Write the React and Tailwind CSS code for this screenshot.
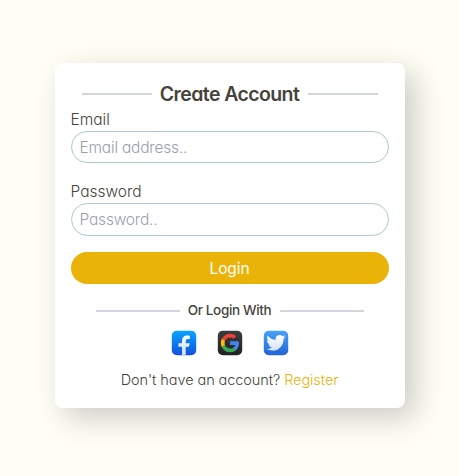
import React from 'react';

function Divider({ width }) {
  return <span className={`mt-[2px] h-[2px] shrink-0 bg-gray-300 ${width}`} />;
}

function FacebookIcon() {
  return (
    <svg width="26" height="26" viewBox="0 0 26 26" aria-label="Facebook">
      <defs>
        <linearGradient id="fb" x1="0" y1="0" x2="0" y2="1">
          <stop offset="0" stopColor="#06a4ff" />
          <stop offset="1" stopColor="#1450dc" />
        </linearGradient>
        <linearGradient id="fbGlyph" x1="0" y1="0" x2="0" y2="1">
          <stop offset="0" stopColor="#fff" />
          <stop offset="1" stopColor="#cbdcf8" />
        </linearGradient>
      </defs>
      <rect x="0.8" y="0.8" width="24.4" height="24.4" rx="5" fill="url(#fb)" />
      <path
        d="M11 25.2v-8.4H7.5v-3.5H11v-2.4c0-3.6 2.1-5.5 5.3-5.5.9 0 1.8.1 2.5.3v3.2h-1.9c-1.6 0-2.2.8-2.2 2v2.4h3.9l-.6 3.5h-3.3v8.4z"
        fill="url(#fbGlyph)"
      />
    </svg>
  );
}

function GoogleIcon() {
  return (
    <svg width="26" height="26" viewBox="0 0 26 26" aria-label="Google">
      <defs>
        <linearGradient id="gg" x1="0" y1="0" x2="0" y2="1">
          <stop offset="0" stopColor="#3c3c3c" />
          <stop offset="1" stopColor="#212121" />
        </linearGradient>
      </defs>
      <rect x="0.8" y="0.8" width="24.4" height="24.4" rx="5" fill="url(#gg)" />
      <g transform="translate(3 2.9) scale(0.84)">
        <path fill="#4285f4" d="M22.56 12.25c0-.78-.07-1.53-.2-2.25H12v4.26h5.92c-.26 1.37-1.04 2.53-2.21 3.31v2.77h3.57c2.08-1.92 3.28-4.74 3.28-8.09z" />
        <path fill="#34a853" d="M12 23c2.97 0 5.46-.98 7.28-2.66l-3.57-2.77c-.98.66-2.23 1.06-3.71 1.06-2.86 0-5.29-1.93-6.16-4.53H2.18v2.84C3.99 20.53 7.7 23 12 23z" />
        <path fill="#fbbc05" d="M5.84 14.09c-.22-.66-.35-1.36-.35-2.09s.13-1.43.35-2.09V7.07H2.18C1.43 8.55 1 10.22 1 12s.43 3.45 1.18 4.93l3.66-2.84z" />
        <path fill="#ea4335" d="M12 5.38c1.62 0 3.06.56 4.21 1.64l3.15-3.15C17.45 2.09 14.97 1 12 1 7.7 1 3.99 3.47 2.18 7.07l3.66 2.84c.87-2.6 3.3-4.53 6.16-4.53z" />
      </g>
    </svg>
  );
}

function TwitterIcon() {
  return (
    <svg width="26" height="26" viewBox="0 0 26 26" aria-label="Twitter">
      <defs>
        <linearGradient id="tw" x1="0" y1="0" x2="0" y2="1">
          <stop offset="0" stopColor="#48a2fb" />
          <stop offset="1" stopColor="#2463d6" />
        </linearGradient>
        <linearGradient id="twGlyph" x1="0" y1="0" x2="0" y2="1">
          <stop offset="0" stopColor="#fff" />
          <stop offset="1" stopColor="#d5e3f8" />
        </linearGradient>
      </defs>
      <rect x="0.8" y="0.8" width="24.4" height="24.4" rx="5" fill="url(#tw)" />
      <path
        transform="translate(3.3 3.2) scale(0.8)"
        fill="url(#twGlyph)"
        d="M23.953 4.57a10 10 0 01-2.825.775 4.958 4.958 0 002.163-2.723c-.951.555-2.005.959-3.127 1.184a4.92 4.92 0 00-8.384 4.482C7.69 8.095 4.067 6.13 1.64 3.162a4.822 4.822 0 00-.666 2.475c0 1.71.87 3.213 2.188 4.096a4.904 4.904 0 01-2.228-.616v.06a4.923 4.923 0 003.946 4.827 4.996 4.996 0 01-2.212.085 4.936 4.936 0 004.604 3.417 9.867 9.867 0 01-6.102 2.105c-.39 0-.779-.023-1.17-.067a13.995 13.995 0 007.557 2.209c9.053 0 13.998-7.496 13.998-13.985 0-.21 0-.42-.015-.63A9.935 9.935 0 0024 4.59z"
      />
    </svg>
  );
}

export default function App() {
  return (
    <main className="flex h-[476px] w-full justify-center bg-[#fefef5] pt-[63px] font-['Inter',sans-serif] text-[15.5px] text-[#45443c] [font-feature-settings:'cv11']">
      <form className="flex h-[345px] w-[350px] flex-col rounded-lg bg-white px-4 pt-4 shadow-[10px_10px_30px_rgba(0,0,0,0.2)]">
        <div className="flex h-7 items-center justify-center gap-2">
          <Divider width="w-[70px]" />
          <h1 className="flex w-[140px] justify-center whitespace-nowrap pt-px text-[19.5px] leading-7 font-semibold tracking-[-0.6px]">Create Account</h1>
          <Divider width="w-[70px]" />
        </div>
        <label htmlFor="email" className="h-6 pt-px leading-6 font-light">Email</label>
        <input id="email" type="email" placeholder="Email address.." className="h-8 w-full rounded-full border border-[#adc8d0] px-2 font-light tracking-[-0.2px] outline-none placeholder:text-gray-400" />
        <label htmlFor="password" className="mt-4 h-6 pt-px leading-6 font-light">Password</label>
        <input id="password" type="password" placeholder="Password.." className="h-[33px] w-full rounded-full border border-[#adc8d0] px-2 font-light tracking-[-0.2px] outline-none placeholder:text-gray-400" />
        <button type="button" className="mt-4 h-8 w-full rounded-full bg-[#eab308] pt-px tracking-[-0.1px] text-white">Login</button>
        <div className="mt-4 flex h-5 items-center justify-center gap-2">
          <Divider width="w-[84px]" />
          <h2 className="flex w-[84px] justify-center whitespace-nowrap pt-px text-[13.5px] font-medium tracking-[-0.35px]">Or Login With</h2>
          <Divider width="w-[84px]" />
        </div>
        <div className="mt-[10px] flex justify-center gap-5">
          <FacebookIcon />
          <GoogleIcon />
          <TwitterIcon />
        </div>
        <p className="mt-3 whitespace-nowrap text-center text-[14.5px] leading-6 font-light tracking-[-0.08px]">
          Don't have an account? <a href="#" className="text-[#eab308]">Register</a>
        </p>
      </form>
    </main>
  );
}
